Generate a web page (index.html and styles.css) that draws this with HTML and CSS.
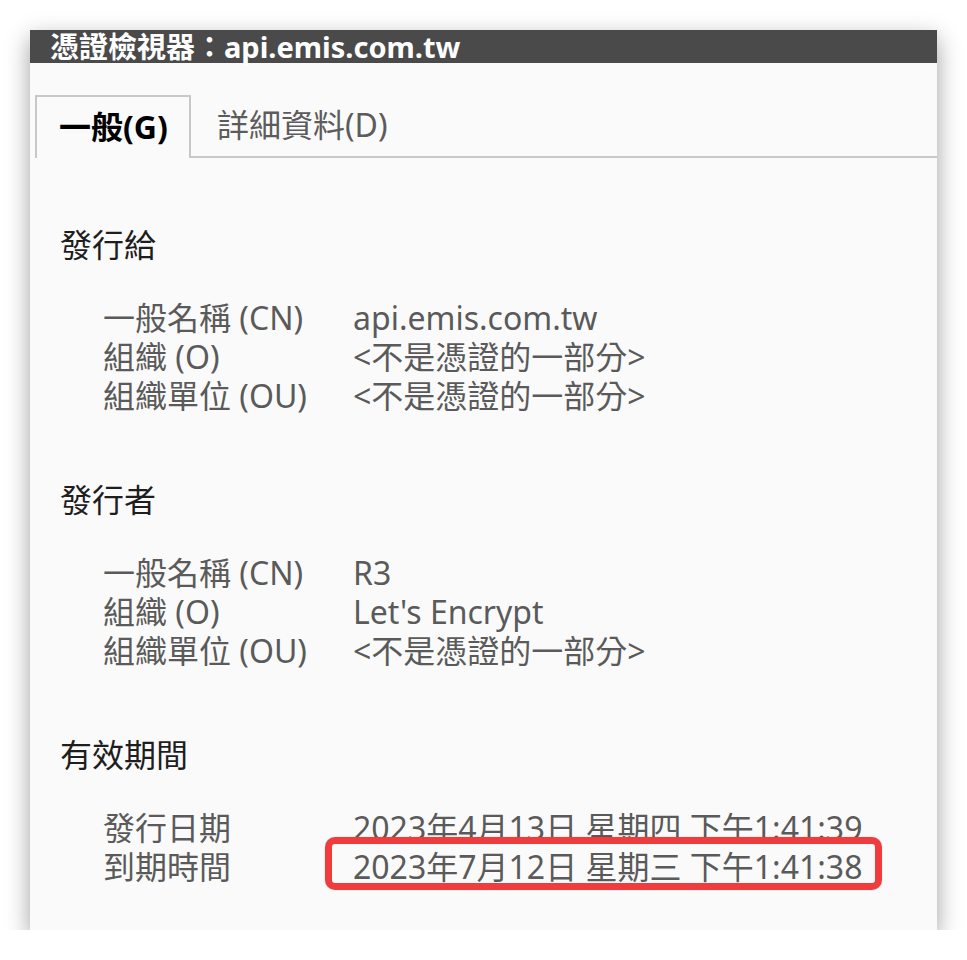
FILE: index.html
```html
<!DOCTYPE html>
<html lang="zh-Hant">
<head>
<meta charset="utf-8">
<title>憑證檢視器</title>
<link rel="stylesheet" href="styles.css">
</head>
<body>
<div class="window">
  <div class="titlebar">憑證檢視器：api.emis.com.tw</div>
  <div class="tabs">
    <div class="tab active">一般(G)</div>
    <div class="tab">詳細資料(D)</div>
    <div class="tab-fill"></div>
  </div>
  <div class="content">
    <section class="section">
      <h2 class="heading">發行給</h2>
      <div class="rows">
        <div class="label">一般名稱 (CN)</div><div class="value">api.emis.com.tw</div>
        <div class="label">組織 (O)</div><div class="value">&lt;不是憑證的一部分&gt;</div>
        <div class="label">組織單位 (OU)</div><div class="value">&lt;不是憑證的一部分&gt;</div>
      </div>
    </section>
    <section class="section">
      <h2 class="heading">發行者</h2>
      <div class="rows">
        <div class="label">一般名稱 (CN)</div><div class="value">R3</div>
        <div class="label">組織 (O)</div><div class="value">Let's Encrypt</div>
        <div class="label">組織單位 (OU)</div><div class="value">&lt;不是憑證的一部分&gt;</div>
      </div>
    </section>
    <section class="section">
      <h2 class="heading">有效期間</h2>
      <div class="rows">
        <div class="label">發行日期</div><div class="value">2023年4月13日 星期四 下午1:41:39</div>
        <div class="label">到期時間</div><div class="value highlighted"><span class="mark"></span>2023年7月12日 星期三 下午1:41:38</div>
      </div>
    </section>
  </div>
</div>
</body>
</html>
```

FILE: styles.css
```css
html, body {
  margin: 0;
  padding: 0;
  background: #ffffff;
}

body {
  padding: 30px 0 0 30px;
  font-family: "Noto Sans", "Noto Sans CJK TC", sans-serif;
}

.window {
  width: 907px;
  height: 900px;
  background: #fafafa;
  box-shadow: 0 8px 22px rgba(0, 0, 0, 0.38);
}

.titlebar {
  height: 33px;
  background: #4a4a4a;
  color: #ffffff;
  font-weight: 700;
  font-size: 29px;
  line-height: 33px;
  padding-left: 20px;
  white-space: nowrap;
}

.tabs {
  display: flex;
  margin-top: 32px;
  padding-left: 5px;
  height: 63px;
}

.tab {
  font-size: 32px;
  line-height: 60px;
  color: #5c5c5c;
  padding: 0 0 0 26px;
  border-bottom: 2px solid #c8c8c8;
  white-space: nowrap;
}

.tab.active {
  width: 156px;
  box-sizing: border-box;
  padding-left: 22px;
  color: #000000;
  font-weight: 700;
  border: 2px solid #c8c8c8;
  border-bottom: none;
  line-height: 59px;
}

.tab-fill {
  flex: 1;
  border-bottom: 2px solid #c8c8c8;
}

.content {
  padding-left: 30px;
}

.section {
  padding-top: 65px;
}

.section:first-child {
  padding-top: 67px;
}

.heading {
  margin: 0;
  font-size: 32px;
  font-weight: 400;
  line-height: 39px;
  color: #1e1e1e;
}

.rows {
  display: grid;
  grid-template-columns: 250px auto;
  margin-top: 34px;
  padding-left: 43px;
  font-size: 32px;
  line-height: 39px;
  color: #5a5a5a;
  justify-content: start;
}

.label, .value {
  white-space: nowrap;
}

.highlighted {
  position: relative;
}

.mark {
  position: absolute;
  left: -28px;
  right: -20px;
  top: -10px;
  bottom: -4px;
  border: 7px solid #f03c3c;
  border-radius: 10px;
  box-shadow: 0 0 1px rgba(0, 0, 0, 0.35);
}
```
